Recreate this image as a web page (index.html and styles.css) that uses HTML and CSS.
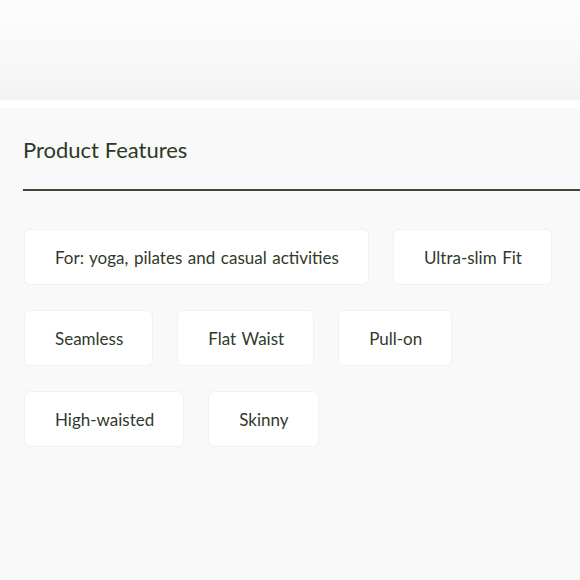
FILE: index.html
```html
<!DOCTYPE html>
<html lang="en">
<head>
<meta charset="utf-8">
<title>Product Features</title>
<link rel="stylesheet" href="styles.css">
</head>
<body>
<div class="hero"></div>
<section class="features">
  <h2 class="features-title">Product Features</h2>
  <ul class="chips">
    <li class="chip">For: yoga, pilates and casual activities</li>
    <li class="chip">Ultra-slim Fit</li>
    <li class="chip">Seamless</li>
    <li class="chip">Flat Waist</li>
    <li class="chip">Pull-on</li>
    <li class="chip">High-waisted</li>
    <li class="chip">Skinny</li>
  </ul>
</section>
</body>
</html>
```
FILE: styles.css
```css
* { box-sizing: border-box; }
html, body { margin: 0; padding: 0; }
body {
  background: #f9f9f9;
  font-family: Lato, "Liberation Sans", sans-serif;
  color: #2e3a29;
  width: 580px;
  overflow: hidden;
}
.hero {
  height: 108px;
  background: linear-gradient(180deg, #fdfdfd 0%, #f8f8f8 60%, #f3f3f3 100%);
  border-bottom: 8px solid #ffffff;
}
.features {
  padding: 28px 0 0 23px;
}
.features-title {
  margin: 0;
  font-size: 22px;
  font-weight: 400;
  line-height: 28px;
  color: #2b3a24;
  padding-bottom: 25px;
  border-bottom: 2px solid #3b4a36;
}
.chips {
  list-style: none;
  margin: 38px 0 0;
  padding: 0 0 0 1px;
  display: flex;
  flex-wrap: wrap;
  column-gap: 24px;
  row-gap: 25px;
  width: 545px;
}
.chip {
  height: 56px;
  display: flex;
  align-items: center;
  padding: 0 29px 0 30px;
  background: #ffffff;
  border: 1px solid #f1f1f1;
  border-radius: 6px;
  font-size: 17px;
  word-spacing: 1.2px;
  color: #2f3a2b;
  white-space: nowrap;
}
```
